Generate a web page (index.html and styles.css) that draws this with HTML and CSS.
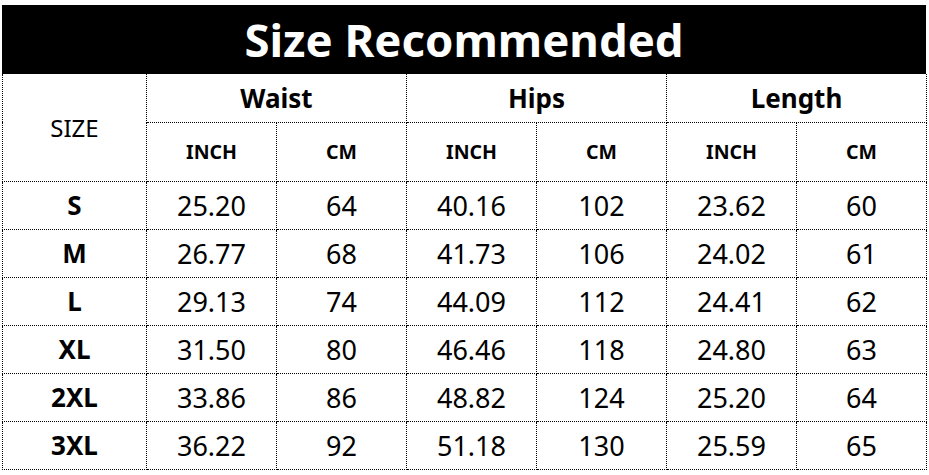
FILE: index.html
```html
<!DOCTYPE html>
<html>
<head>
<meta charset="utf-8">
<link rel="stylesheet" href="styles.css">
</head>
<body>
<div class="title">Size Recommended</div>
<table class="sizes">
  <colgroup>
    <col class="c-size"><col class="c-val"><col class="c-val"><col class="c-val"><col class="c-val"><col class="c-val"><col class="c-last">
  </colgroup>
  <tr class="r-group">
    <td rowspan="2" class="size-head">SIZE</td>
    <th colspan="2">Waist</th>
    <th colspan="2">Hips</th>
    <th colspan="2">Length</th>
  </tr>
  <tr class="r-unit">
    <th>INCH</th><th>CM</th><th>INCH</th><th>CM</th><th>INCH</th><th>CM</th>
  </tr>
  <tr><th class="lbl">S</th><td>25.20</td><td>64</td><td>40.16</td><td>102</td><td>23.62</td><td>60</td></tr>
  <tr><th class="lbl">M</th><td>26.77</td><td>68</td><td>41.73</td><td>106</td><td>24.02</td><td>61</td></tr>
  <tr><th class="lbl">L</th><td>29.13</td><td>74</td><td>44.09</td><td>112</td><td>24.41</td><td>62</td></tr>
  <tr><th class="lbl">XL</th><td>31.50</td><td>80</td><td>46.46</td><td>118</td><td>24.80</td><td>63</td></tr>
  <tr><th class="lbl">2XL</th><td>33.86</td><td>86</td><td>48.82</td><td>124</td><td>25.20</td><td>64</td></tr>
  <tr><th class="lbl">3XL</th><td>36.22</td><td>92</td><td>51.18</td><td>130</td><td>25.59</td><td>65</td></tr>
</table>
</body>
</html>
```
FILE: styles.css
```css
html, body {
  margin: 0;
  padding: 0;
  background: #fff;
}
body {
  padding: 5px 0 0 2px;
  font-family: "Noto Sans", "Open Sans", sans-serif;
  color: #000;
}
.title {
  width: 924px;
  height: 69px;
  background: #000;
  color: #fff;
  font-weight: bold;
  font-size: 45.5px;
  line-height: 69px;
  text-align: center;
}
.sizes {
  border-collapse: collapse;
  table-layout: fixed;
  width: 924px;
}
.c-size { width: 144px; }
.c-val { width: 130px; }
.c-last { width: 130px; }
.sizes td, .sizes th {
  border: 1px dotted #000;
  text-align: center;
  vertical-align: middle;
  padding: 0;
}
.sizes td {
  font-size: 27px;
  font-weight: normal;
}
.sizes th {
  font-weight: bold;
}
.r-group { height: 48px; }
.r-group th { font-size: 26px; }
.size-head { font-size: 24px !important; }
.r-unit { height: 59px; }
.r-unit th { font-size: 19.5px; }
.sizes tr { height: 48px; }
.sizes .r-unit { height: 59px; }
.lbl { font-size: 26px; }
.sizes tr:first-child td, .sizes tr:first-child th { border-top: none; }
```
